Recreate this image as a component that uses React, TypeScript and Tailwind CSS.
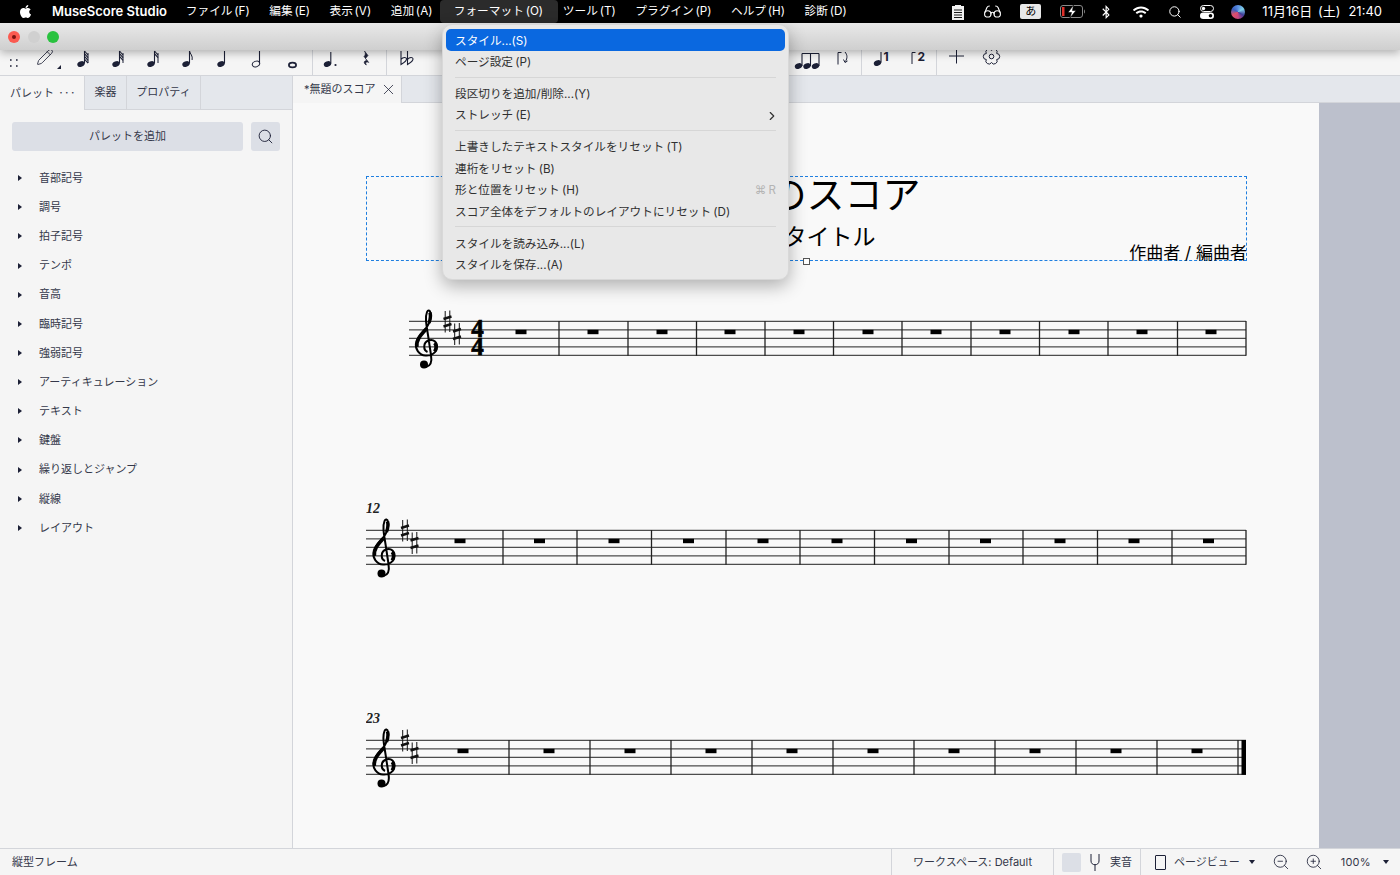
import React from 'react';
import { ChevronRight, Glasses, Pencil, Search, X, ZoomIn, ZoomOut } from 'lucide-react';
import { FaApple, FaBluetoothB, FaWifi } from 'react-icons/fa';

const menus = ['ファイル (F)', '編集 (E)', '表示 (V)', '追加 (A)'];
const menusAfter = ['ツール (T)', 'プラグイン (P)', 'ヘルプ (H)', '診断 (D)'];
const palettes = ['音部記号', '調号', '拍子記号', 'テンポ', '音高', '臨時記号', '強弱記号', 'アーティキュレーション', 'テキスト', '鍵盤', '繰り返しとジャンプ', '縦線', 'レイアウト'];

const INK = '#1c2036';

const Head = ({ x = 13.5, y = 14, open = false }: { x?: number; y?: number; open?: boolean }) => (
  <ellipse cx={x} cy={y} rx={3.8} ry={2.8} transform={`rotate(-22 ${x} ${y})`} fill={open ? 'none' : INK} stroke={INK} strokeWidth={open ? 1 : 0} />
);

const ToolIcon = ({ children }: { children?: React.ReactNode }) => (
  <svg viewBox="0 0 35 25" className="w-[35px] h-[25px] shrink-0">
    <g transform="translate(2.5 0)">{children}</g>
  </svg>
);

// note with hatched flags, flags = 0 gives a plain quarter
const Note = ({ flags = 0, open = false }: { flags?: number; open?: boolean }) => (
  <ToolIcon>
    <Head open={open} />
    <path d="M17 13.5V1" stroke={INK} strokeWidth={1.1} />
    {flags === 1 && <path d="M17 1c.5 3 3.6 4.5 2.6 9" stroke={INK} strokeWidth={1} fill="none" />}
    {flags > 1 && (
      <>
        <path d="M20.5 3V13" stroke={INK} strokeWidth={1} />
        {Array.from({ length: flags }).map((_, i) => (
          <path key={i} d={`M17 ${1 + i * 2.7}l3.5 4`} stroke={INK} strokeWidth={1.1} />
        ))}
      </>
    )}
  </ToolIcon>
);

const Divider = () => <div className="w-px h-[25px] bg-[#d3d5da] shrink-0" />;

const Toolbar = () => (
  <div className="flex h-[26px] shrink-0 bg-[#f5f5f5] border-b border-[#d3d5da] overflow-hidden">
    <div className="w-[28px] shrink-0 flex items-center justify-center">
      <svg viewBox="0 0 10 8" className="w-[10px] h-[8px]">
        <path d="M1 1h1.6M7 1h1.6M1 7h1.6M7 7h1.6" stroke={INK} strokeWidth={1.4} />
      </svg>
    </div>
    <div className="w-[36.5px] shrink-0 relative flex items-start justify-center">
      <Pencil size={18} strokeWidth={1.1} color={INK} className="-mt-[2px] -ml-[2px]" />
      <div className="absolute right-[4px] bottom-[6px] w-0 h-0 border-l-[4px] border-l-transparent border-b-[4px] border-b-[#1c2036]" />
    </div>
    <Note flags={4} />
    <Note flags={3} />
    <Note flags={2} />
    <Note flags={1} />
    <Note />
    <Note open />
    <ToolIcon>
      <ellipse cx={15} cy={15} rx={3.6} ry={2.4} fill="none" stroke={INK} strokeWidth={1.7} />
    </ToolIcon>
    <div className="w-[2.5px] shrink-0" />
    <Divider />
    <ToolIcon>
      <Head x={12} />
      <path d="M15.3 13.5V2" stroke={INK} strokeWidth={1.1} />
      <circle cx={20} cy={15} r={1.1} fill={INK} />
    </ToolIcon>
    <ToolIcon>
      <path d="M14 1l3.5 4.5-2.5 3 3.3 4c-2.5-1-4-.2-2.4 2.5-3-1.5-3-4.500.7-4.500L13.500 6.500c1.800-1.500 1.500-3.500.5-5.500z" fill={INK} stroke={INK} strokeWidth={0.6} />
    </ToolIcon>
    <div className="w-[3px] shrink-0" />
    <Divider />
    <div className="w-[1.5px] shrink-0" />
    <ToolIcon>
      <path d="M9.500 1V14.500c2.500-1.500 5.500-3 5.500-5.500 0-2-3.500-2-5.500.5M16 1V14.500c2.500-1.500 5.500-3 5.500-5.500 0-2-3.500-2-5.500.5" fill="none" stroke={INK} strokeWidth={1.1} />
    </ToolIcon>
    <div className="w-[367.500px] shrink-0" />
    <ToolIcon>
      <Head x={5} y={16} />
      <Head x={13.500} y={16} />
      <Head x={22} y={16} />
      <path d="M8.500 16V3.500M17 16V3.500M25.500 16V3.500M8.500 3.500H25.500" stroke={INK} strokeWidth={1.1} fill="none" />
    </ToolIcon>
    <ToolIcon>
      <path d="M9.500 14.500V2.500H13" stroke={INK} strokeWidth={1} fill="none" />
      <path d="M16.500 2c2.500 3 2.500 6 .5 9.500M15 9.500l1.500 3 2.500-1.500" stroke={INK} strokeWidth={1} fill="none" />
    </ToolIcon>
    <Divider />
    <div className="w-[2.500px] shrink-0 -ml-[1px]" />
    <ToolIcon>
      <Head x={11} y={13} />
      <path d="M14.500 12.500V2" stroke={INK} strokeWidth={1.1} />
      <text x={17} y={11} fontSize={12} fontWeight={700} fill={INK} fontFamily="Inter, sans-serif">1</text>
    </ToolIcon>
    <ToolIcon>
      <path d="M10.500 14V2.500H14" stroke={INK} strokeWidth={1} fill="none" />
      <text x={16} y={11} fontSize={12} fontWeight={700} fill={INK} fontFamily="Inter, sans-serif">2</text>
    </ToolIcon>
    <div className="w-[2px] shrink-0" />
    <Divider />
    <div className="w-[2.500px] shrink-0" />
    <ToolIcon>
      <path d="M7.500 6h15M15 -1.500v15" stroke={INK} strokeWidth={1} />
    </ToolIcon>
    <ToolIcon>
      <g transform="translate(15 6.500)" fill="none" stroke={INK} strokeWidth={1}>
        <path d="M5.200 -3A3 3 0 0 1 5.200 3A3 3 0 0 1 0 6A3 3 0 0 1 -5.200 3A3 3 0 0 1 -5.200 -3A3 3 0 0 1 0 -6A3 3 0 0 1 5.200 -3Z" />
        <circle r={2.300} />
      </g>
    </ToolIcon>
  </div>
);

const MenuBar = () => (
  <div className="flex items-center h-[23px] shrink-0 bg-black text-white text-[11.700px] [word-spacing:-1.5px] pl-[18px] pr-[18px]">
    <FaApple size={15} className="mr-[19px]" />
    <span className="font-semibold text-[13px] [word-spacing:0] mr-[9px]">MuseScore Studio</span>
    {menus.map((m) => (
      <span key={m} className="px-[9.750px] whitespace-nowrap">{m}</span>
    ))}
    <span className="pl-[14px] pr-[15px] h-[23px] flex items-center -ml-[2.500px] -mr-[5px] bg-[#2b2b2b] rounded-[4px] whitespace-nowrap">フォーマット (O)</span>
    {menusAfter.map((m) => (
      <span key={m} className="px-[9.750px] whitespace-nowrap">{m}</span>
    ))}
    <div className="flex-1" />
    <div className="flex items-center">
      <svg viewBox="0 0 14 16" className="w-[14px] h-[16px]">
        <path d="M1 2h3V1h6v1h3v14H1z" fill="#f2f2f2" />
        <path d="M3 6h8M3 8.500h8M3 11h8M3 13.500h8" stroke="#000" strokeWidth={0.9} />
      </svg>
      <Glasses size={19} strokeWidth={1.4} className="ml-[18px]" />
      <span className="ml-[18px] w-[21px] h-[15px] rounded-[2px] bg-[#e8e8e8] text-black text-[11px] leading-[15px] text-center">あ</span>
      <svg viewBox="0 0 26 13" className="ml-[19px] w-[26px] h-[13px]">
        <rect x={0.500} y={0.500} width={22} height={12} rx={2.500} fill="none" stroke="#8a8a8a" />
        <rect x={2} y={2} width={2.500} height={9} fill="#e0302a" />
        <path d="M24 4.500c1.200 0 1.200 4 0 4z" fill="#8a8a8a" />
        <path d="M13.500 0L8 7.500h3.500L10 13l6-7.500h-3.500z" fill="#fff" stroke="#000" strokeWidth={0.600} />
      </svg>
      <FaBluetoothB size={14} className="ml-[13px]" />
      <FaWifi size={16} className="ml-[20px]" />
      <Search size={14} strokeWidth={1.7} className="ml-[19px]" />
      <svg viewBox="0 0 14 14" className="ml-[18px] w-[14px] h-[14px]">
        <rect x={0.500} y={0.500} width={13} height={6} rx={3} fill="none" stroke="#fff" />
        <rect x={0} y={7.500} width={14} height={6.500} rx={3.200} fill="#fff" />
        <circle cx={3.500} cy={3.500} r={1.700} fill="#fff" />
        <circle cx={10.500} cy={10.700} r={1.800} fill="#000" />
      </svg>
      <div className="ml-[17px] w-[14px] h-[14px] rounded-full bg-[conic-gradient(#5a8fe0,#7fd0e8,#3e3f9a,#c9467e,#e0506a,#3a5fc0,#5a8fe0)]" />
      <span className="ml-[17px] text-[13px] [word-spacing:2px] whitespace-nowrap">11月16日 (土)</span>
      <span className="ml-[8px] text-[13px]">21:40</span>
    </div>
  </div>
);

const TitleBar = () => (
  <div className="relative z-10 flex items-center gap-[7.500px] h-[27px] shrink-0 pl-[8px] bg-gradient-to-b from-[#e9e9e9] to-[#cfcfcf] shadow-[0_3px_9px_rgba(0,0,0,0.28)]">
    <div className="w-[12px] h-[12px] rounded-full bg-[#fb5a50] flex items-center justify-center">
      <div className="w-[4px] h-[4px] rounded-full bg-[#7a1410]" />
    </div>
    <div className="w-[12px] h-[12px] rounded-full bg-[#d0d0d0]" />
    <div className="w-[12px] h-[12px] rounded-full bg-[#29c23f]" />
  </div>
);

const Sidebar = () => (
  <div className="flex flex-col w-[293px] shrink-0 bg-[#f5f5f5] border-r border-[#d3d5da] text-[#34384a] text-[11px]">
    <div className="flex h-[34px] shrink-0 bg-[#e4e7ec] border-b border-[#d3d5da]">
      <div className="relative -mb-px flex items-center justify-between w-[85px] pl-[10px] pr-[7px] bg-[#f5f5f5] border-r border-[#d3d5da]">
        <span>パレット</span>
        <span className="tracking-[2.500px] text-[12px]">···</span>
      </div>
      <div className="flex items-center justify-center w-[42px] border-r border-[#d3d5da]">楽器</div>
      <div className="flex items-center justify-center w-[74px] border-r border-[#d3d5da]">プロパティ</div>
    </div>
    <div className="flex gap-[8px] px-[12px] pt-[12px] pb-[12.500px]">
      <button className="flex-1 h-[29px] rounded-[3px] bg-[#dcdfe6]">パレットを追加</button>
      <button className="flex items-center justify-center w-[29px] h-[29px] rounded-[3px] bg-[#dcdfe6]">
        <Search size={17} strokeWidth={1.3} color={INK} />
      </button>
    </div>
    <div className="flex flex-col">
      {palettes.map((p) => (
        <div key={p} className="flex items-center h-[29.170px] pl-[18px] gap-[17px]">
          <div className="w-0 h-0 border-y-[3px] border-y-transparent border-l-[4px] border-l-[#1c2036]" />
          <span>{p}</span>
        </div>
      ))}
    </div>
  </div>
);

const LINE = '#222222';

const Sharp = ({ x, y }: { x: number; y: number }) => (
  <g transform={`translate(${x} ${y})`} stroke="#111">
    <path d="M-2.300 -10.500V11M2.300 -11V10.500" strokeWidth={1} />
    <path d="M-4 -2.500L4 -5M-4 5L4 2.500" strokeWidth={2.400} />
  </g>
);

const Clef = ({ x, y }: { x: number; y: number }) => (
  <g transform={`translate(${x} ${y})`} fill="none" stroke="#000">
    <path strokeWidth={2} d="M12.500 43C8 41 8 33.500 13.500 31.500C19 29.500 22.500 34 22 38.500C21.500 44 16 47 10.500 46.500C4 46 0 40 1 34C2 27 9 22 12.500 17C15 13 16.500 9 15.500 4C15 1 13 .5 12 3C10 8 11 14 13 26L16 46C17 52 16 57 11 58" />
    <path strokeWidth={3.400} d="M2 38C1 31 6 26 11 20.500M14 14C15.500 10 16 7 15 3.500M19.500 42.500C21.500 40 21.500 36 19.500 34" />
    <circle cx={9} cy={55.500} r={4} fill="#000" stroke="none" />
  </g>
);

type StaffProps = {
  minY: number;
  height: number;
  top: number;
  left: number;
  clefX: number;
  sharps: [number, number];
  bars: number[];
  rests: number[];
  number?: string;
  meter?: boolean;
  final?: boolean;
  className?: string;
};

const Staff = ({ minY, height, top, left, clefX, sharps, bars, rests, number, meter, final, className }: StaffProps) => (
  <svg viewBox={`366 ${minY} 882 ${height}`} className={`w-[882px] shrink-0 ${className}`} style={{ height }}>
    {[0, 8.6, 17, 25.6, 34].map((d) => (
      <path key={d} d={`M${left} ${top + d + 0.3}H1246`} stroke={LINE} strokeWidth={1} />
    ))}
    {bars.map((b) => (
      <path key={b} d={`M${b} ${top}V${top + 34.800}`} stroke="#222" strokeWidth={1.300} />
    ))}
    {rests.map((r) => (
      <rect key={r} x={r - 5.500} y={top + 8.800} width={11} height={4.400} fill="#000" />
    ))}
    <Clef x={clefX} y={top - 12} />
    <Sharp x={sharps[0]} y={top + 0.500} />
    <Sharp x={sharps[1]} y={top + 13} />
    {meter && (
      <g fontFamily="'Liberation Serif', serif" fontWeight={700} fontSize={25} textAnchor="middle" stroke="#000" strokeWidth={0.700}>
        <text x={477.500} y={top + 16}>4</text>
        <text x={477.500} y={top + 33.500}>4</text>
      </g>
    )}
    {number && (
      <text x={366} y={top - 17} fontFamily="'Liberation Serif', serif" fontStyle="italic" fontWeight={700} fontSize={14} fill="#222">{number}</text>
    )}
    {final && <rect x={1241.500} y={top} width={4.500} height={34.800} fill="#000" />}
  </svg>
);

const Score = () => (
  <div className="flex-1 flex min-h-0 bg-[#bcc0cc]">
    <div className="w-[1026px] bg-[#f9f9f9] flex flex-col pl-[73px] pt-[73px]">
      <div className="relative flex flex-col items-center w-[881px] h-[85px] shrink-0 border border-dashed border-[#1f7fe0] text-black">
        <span className="text-[38px] leading-[36px] mt-[-1px]">無題のスコア</span>
        <span className="text-[23px] leading-[30px] mt-[10px]">サブタイトル</span>
        <span className="self-end text-[17px] leading-[20px] -mt-[9px] -mr-px">作曲者 / 編曲者</span>
        <div className="absolute left-[436px] bottom-[-5px] w-[7px] h-[7px] border border-[#555] bg-white" />
      </div>
      <Staff
        className="mt-[39px]"
        minY={300}
        height={75}
        top={321}
        left={409}
        clefX={415}
        sharps={[447.500, 457]}
        bars={[559, 628, 696.500, 765, 833.500, 902, 971, 1039.500, 1108, 1177.500, 1246]}
        rests={[521, 593, 662, 730, 799, 868, 936, 1005, 1074, 1142, 1211]}
        meter
      />
      <Staff
        className="mt-[120px]"
        minY={495}
        height={90}
        top={530}
        left={366}
        clefX={372.500}
        sharps={[405, 414.500]}
        bars={[503, 577, 651.500, 726, 800, 874.500, 949, 1023, 1097.500, 1172, 1246]}
        rests={[460, 539.500, 614, 688.500, 763, 837, 911.500, 985.500, 1060, 1134, 1208.500]}
        number="12"
      />
      <Staff
        className="mt-[120px]"
        minY={705}
        height={90}
        top={740}
        left={366}
        clefX={372.500}
        sharps={[405, 414.500]}
        bars={[509, 590, 671, 752, 833, 914, 995, 1076, 1157, 1238]}
        rests={[463, 549, 630, 711, 792, 873, 954, 1035, 1116, 1197]}
        number="23"
        final
      />
    </div>
  </div>
);

const DropItem = ({ label, active, shortcut, sub }: { label: string; active?: boolean; shortcut?: string; sub?: boolean }) => (
  <div className={`flex items-center justify-between h-[21.500px] pt-[3px] px-[9px] rounded-[5px] whitespace-nowrap ${active ? 'bg-[#0a68e0] text-white' : ''}`}>
    <span>{label}</span>
    {shortcut && <span className="text-[#b4b4b4] text-[11.500px]">{shortcut}</span>}
    {sub && <ChevronRight size={14} strokeWidth={2} className="text-[#333] -mr-[3px]" />}
  </div>
);

const DropSep = () => <div className="h-px mx-[9px] my-[4.700px] bg-[#d6d6d6]" />;

const FormatMenu = () => (
  <div className="absolute z-20 left-[442px] top-[24px] w-[347px] px-[3px] pt-[4px] pb-[3.500px] rounded-[10px] bg-[#e8e8e8] text-[#303030] text-[11.650px] [word-spacing:-1px] shadow-[0_6px_18px_rgba(0,0,0,0.3)] border border-[#d8d8d8]">
    <DropItem label="スタイル...(S)" active />
    <DropItem label="ページ設定 (P)" />
    <DropSep />
    <DropItem label="段区切りを追加/削除...(Y)" />
    <DropItem label="ストレッチ (E)" sub />
    <DropSep />
    <DropItem label="上書きしたテキストスタイルをリセット (T)" />
    <DropItem label="連桁をリセット (B)" />
    <DropItem label="形と位置をリセット (H)" shortcut="⌘ R" />
    <DropItem label="スコア全体をデフォルトのレイアウトにリセット (D)" />
    <DropSep />
    <DropItem label="スタイルを読み込み...(L)" />
    <DropItem label="スタイルを保存...(A)" />
  </div>
);

const StatusBar = () => (
  <div className="flex items-center h-[27px] shrink-0 bg-[#f5f5f5] border-t border-[#d3d5da] text-[#34384a] text-[11px]">
    <span className="pl-[12px]">縦型フレーム</span>
    <div className="flex-1" />
    <div className="flex items-center h-full w-[162px] justify-center border-l border-[#d3d5da]">ワークスペース: Default</div>
    <div className="flex items-center h-full w-[87px] pl-[8px] border-l border-[#d3d5da]">
      <div className="w-[19px] h-[19px] rounded-[2px] bg-[#dcdfe6]" />
      <svg viewBox="0 0 10 18" className="ml-[9px] w-[10px] h-[18px]">
        <path d="M1 1v7c0 5 8 5 8 0V1M5 11.500V18" fill="none" stroke={INK} strokeWidth={1} />
      </svg>
      <span className="ml-[10px]">実音</span>
    </div>
    <div className="flex items-center h-full w-[260px] pl-[14px] border-l border-[#d3d5da]">
      <div className="w-[11px] h-[15px] border border-[#1c2036] rounded-[1px]" />
      <span className="ml-[8px]">ページビュー</span>
      <div className="ml-[9px] w-0 h-0 border-x-[3px] border-x-transparent border-t-[4px] border-t-[#1c2036]" />
      <ZoomOut size={18} strokeWidth={1.1} color={INK} className="ml-[17px]" />
      <ZoomIn size={18} strokeWidth={1.1} color={INK} className="ml-[15px]" />
      <span className="ml-[18px] tracking-[0.2px]">100%</span>
      <div className="ml-[12px] w-0 h-0 border-x-[3px] border-x-transparent border-t-[4px] border-t-[#1c2036]" />
    </div>
  </div>
);

export default function App() {
  return (
    <div className="relative flex flex-col w-[1400px] h-[875px] overflow-hidden bg-[#f5f5f5] font-['Inter','Noto_Sans_CJK_JP',sans-serif]">
      <MenuBar />
      <TitleBar />
      <Toolbar />
      <div className="flex flex-1 min-h-0">
        <Sidebar />
        <div className="flex flex-col flex-1 min-w-0">
          <div className="flex h-[27px] shrink-0 bg-[#e4e7ec] border-b border-[#d3d5da] text-[#34384a] text-[11px]">
            <div className="flex items-center w-[109px] -mb-px pl-[11px] bg-[#f5f5f5] border-r border-[#d3d5da]">
              <span>*無題のスコア</span>
              <X size={17} strokeWidth={1.1} color={INK} className="ml-[4px]" />
            </div>
          </div>
          <Score />
        </div>
      </div>
      <StatusBar />
      <FormatMenu />
    </div>
  );
}
